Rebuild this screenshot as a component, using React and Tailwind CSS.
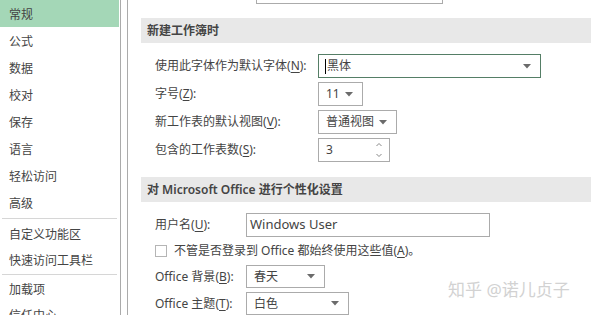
import React from "react";

const navTop = ["常规", "公式", "数据", "校对", "保存", "语言", "轻松访问", "高级"];

function Arrow() {
  return (
    <svg width="8" height="5" viewBox="0 0 8 5" className="shrink-0">
      <path d="M0 0 L8 0 L4 4.5 Z" fill="#6b6b6b" />
    </svg>
  );
}

function Key({ k }) {
  return (
    <>
      (<span className="underline underline-offset-2">{k}</span>):
    </>
  );
}

function Select({ value, width, tall = "h-[24px]" }) {
  return (
    <div
      className={`flex ${tall} items-center justify-between border border-[#ababab] bg-white pl-[7px] pr-[9px]`}
      style={{ width }}
    >
      <span>{value}</span>
      <Arrow />
    </div>
  );
}

function NavItem({ label, active, h = "h-[27px]" }) {
  return (
    <div
      className={`flex ${h} shrink-0 items-center pl-[9px] pt-[2px] ${
        active ? "bg-[#a4d7b7]" : ""
      }`}
    >
      {label}
    </div>
  );
}

function App() {
  return (
    <div className="relative flex h-[315px] w-[591px] overflow-hidden bg-white font-['Noto_Sans','Noto_Sans_CJK_SC',sans-serif] text-[12px] text-[#444]">
      <nav className="flex w-[121px] shrink-0 flex-col border-r border-[#ababab] pr-[1px]">
        {navTop.map((n, i) => (
          <NavItem key={n} label={n} active={i === 0} />
        ))}
        <div className="mx-[2px] my-[2px] h-[1px] shrink-0 bg-[#d6d6d6]" />
        <NavItem label="自定义功能区" h="h-[26px]" />
        <NavItem label="快速访问工具栏" h="h-[26px]" />
        <div className="mx-[2px] my-[1px] h-[1px] shrink-0 bg-[#d6d6d6]" />
        <NavItem label="加载项" h="h-[26px]" />
        <NavItem label="信任中心" h="h-[26px]" />
      </nav>

      <main className="ml-[6px] flex min-w-0 flex-1 flex-col border-l border-[#ababab]">
        <div className="h-[4px] shrink-0">
          <div className="ml-[128px] h-[4px] w-[187px] border-x border-b border-[#ababab]" />
        </div>

        <section className="ml-[13px] mt-[14px] shrink-0">
          <h2 className="flex h-[25px] items-center bg-[#e8e8e8] pl-[6px] font-semibold">
            新建工作簿时
          </h2>
          <div className="mt-[11px] flex flex-col gap-[4px] pl-[14px]">
            <div className="flex items-center">
              <label className="w-[163px]">
                使用此字体作为默认字体<Key k="N" />
              </label>
              <div className="flex h-[24px] w-[223px] items-center justify-between border border-[#557e66] pl-[6px] pr-[9px]">
                <span className="flex items-center">
                  <span className="mr-[1px] h-[15px] w-[1px] bg-black" />
                  黑体
                </span>
                <Arrow />
              </div>
            </div>
            <div className="flex items-center">
              <label className="w-[163px]">
                字号<Key k="Z" />
              </label>
              <Select value="11" width={45} />
            </div>
            <div className="flex items-center">
              <label className="w-[163px]">
                新工作表的默认视图<Key k="V" />
              </label>
              <Select value="普通视图" width={79} />
            </div>
            <div className="flex items-center">
              <label className="w-[163px]">
                包含的工作表数<Key k="S" />
              </label>
              <div className="flex h-[24px] w-[72px] items-center justify-between border border-[#ababab] pl-[7px] pr-[6px]">
                <span>3</span>
                <svg width="8" height="18" viewBox="0 0 8 18">
                  <path d="M1.5 5 L4 2.5 L6.5 5" fill="none" stroke="#888" strokeWidth="1" />
                  <path d="M1.5 13 L4 15.5 L6.5 13" fill="none" stroke="#888" strokeWidth="1" />
                </svg>
              </div>
            </div>
          </div>
        </section>

        <section className="ml-[13px] mt-[15px] shrink-0">
          <h2 className="flex h-[25px] items-center bg-[#e8e8e8] pl-[6px] font-semibold">
            对 Microsoft Office 进行个性化设置
          </h2>
          <div className="mt-[11px] flex flex-col pl-[14px]">
            <div className="flex items-center">
              <label className="w-[91px]">
                用户名<Key k="U" />
              </label>
              <div className="flex h-[24px] w-[244px] items-center border border-[#ababab] pl-[3px] text-[13px]">
                Windows User
              </div>
            </div>
            <div className="mt-[4px] flex h-[19px] items-center">
              <span className="h-[12px] w-[12px] border border-[#b5b5b5]" />
              <span className="ml-[7px]">
                不管是否登录到 Office 都始终使用这些值(
                <span className="underline underline-offset-2">A</span>)。
              </span>
            </div>
            <div className="mt-[5px] flex items-center">
              <label className="w-[91px]">
                Office 背景<Key k="B" />
              </label>
              <Select value="春天" width={79} tall="h-[23px]" />
            </div>
            <div className="mt-[4px] flex items-center">
              <label className="w-[91px]">
                Office 主题<Key k="T" />
              </label>
              <Select value="白色" width={103} tall="h-[23px]" />
            </div>
          </div>
        </section>
      </main>

      <div className="pointer-events-none absolute left-[448px] top-[278px] whitespace-nowrap text-[17px] leading-[24px] text-[#d2d2d2]">
        知乎 @诺儿贞子
      </div>
    </div>
  );
}

export default App;
